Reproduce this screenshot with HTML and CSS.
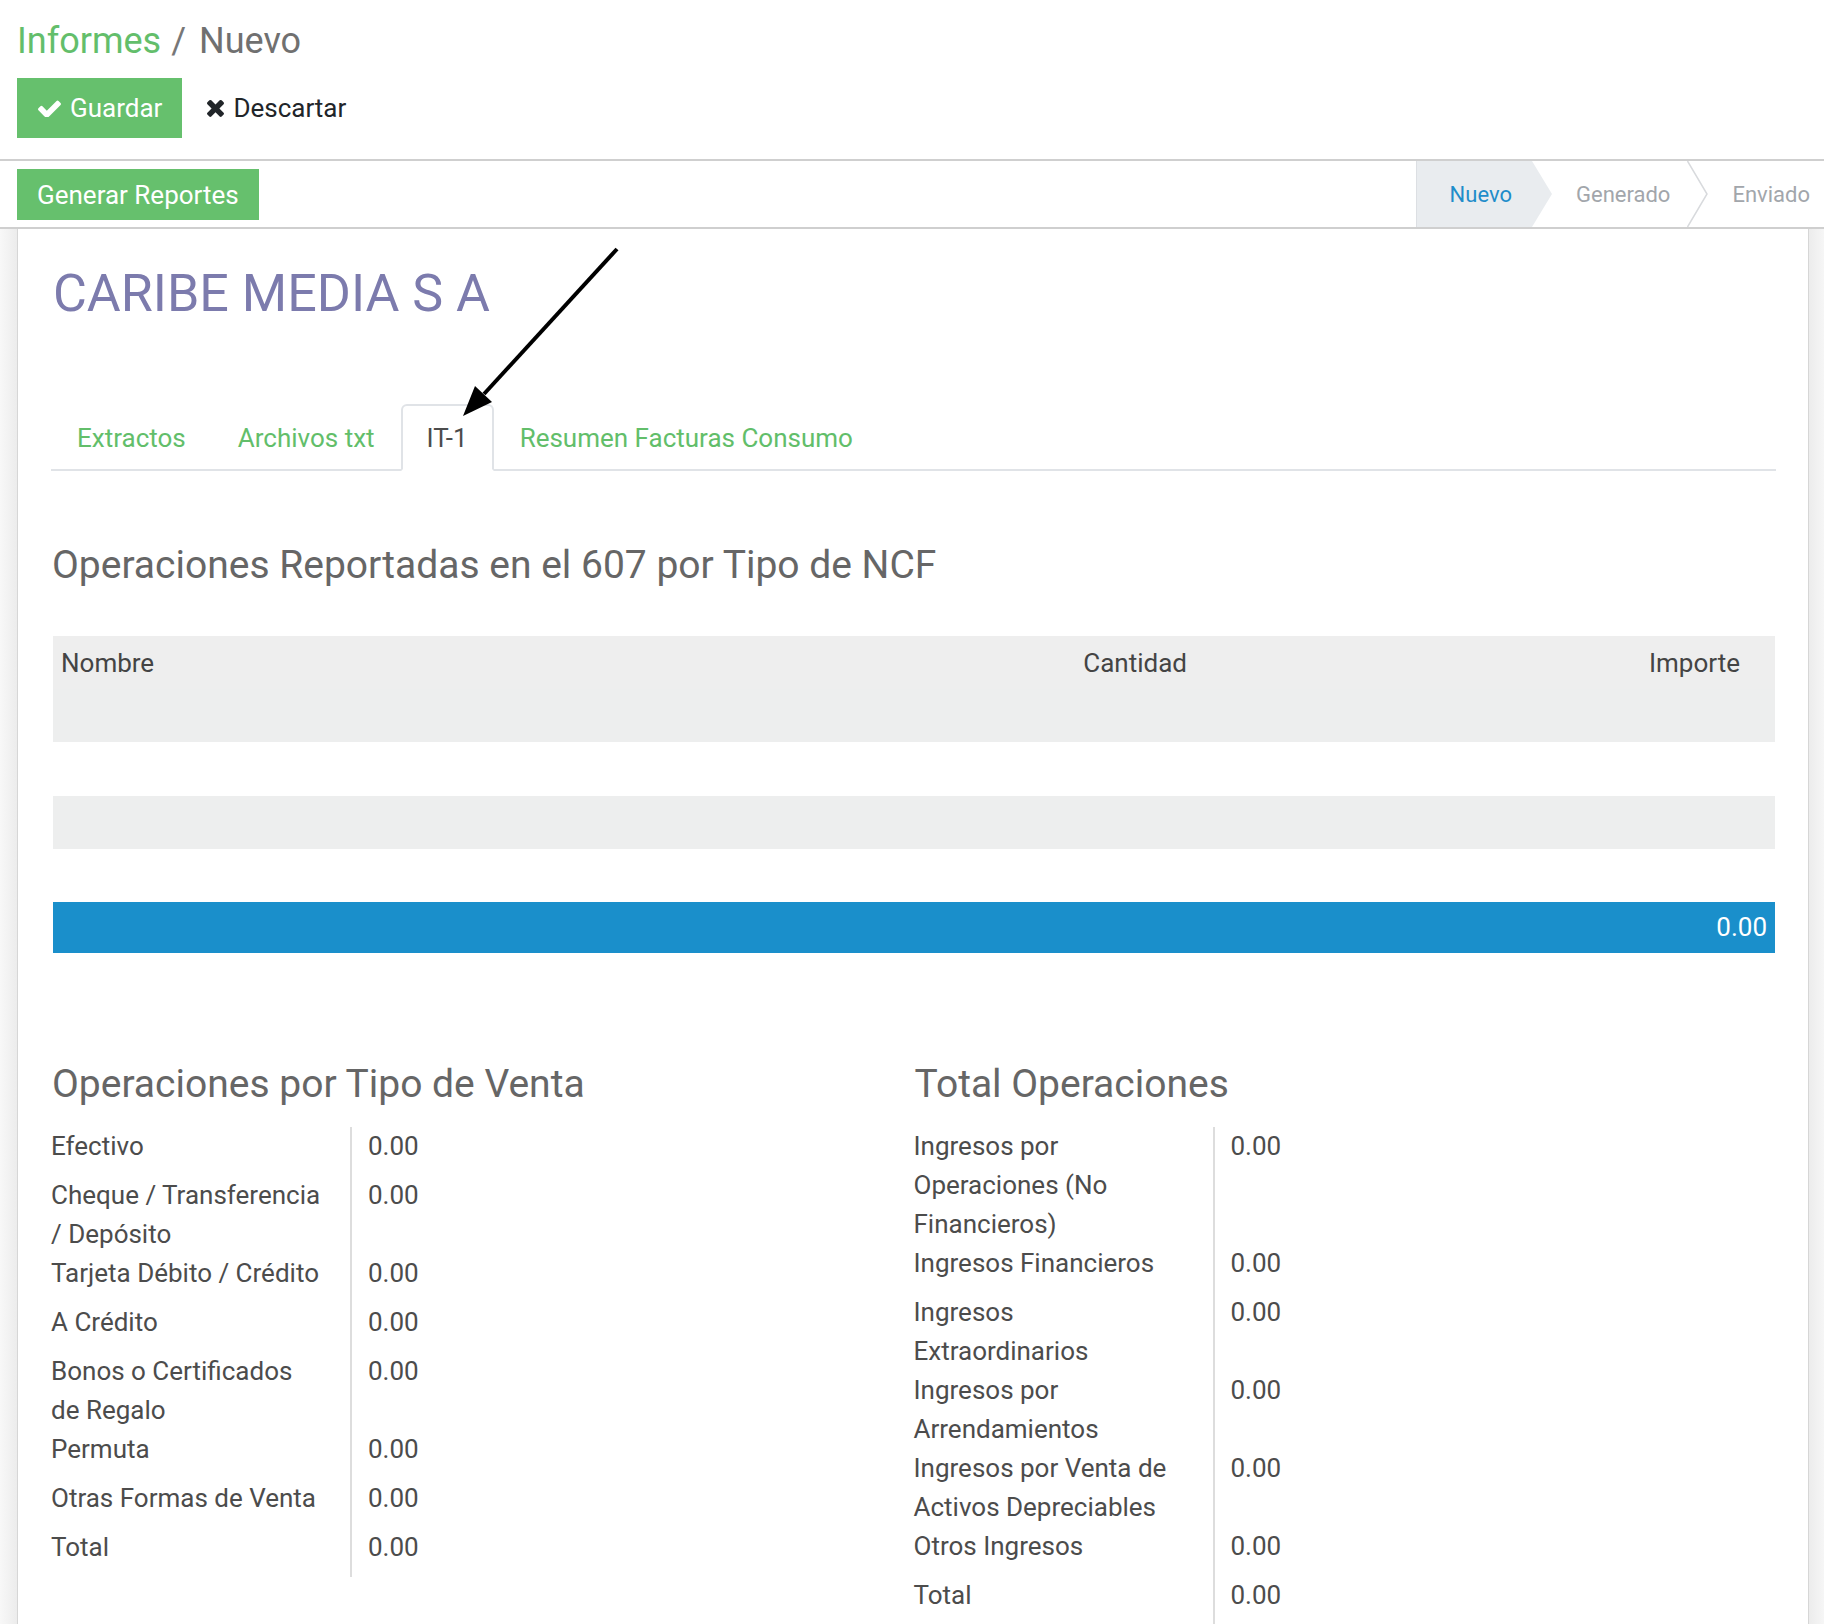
FILE: index.html
```html
<!DOCTYPE html>
<html lang="es">
<head>
<meta charset="utf-8">
<title>Informes / Nuevo</title>
<link rel="stylesheet" href="styles.css">
</head>
<body>
<div class="cp">
  <div class="breadcrumb"><span class="bc-link">Informes</span><span class="bc-sep">/</span><span class="bc-cur">Nuevo</span></div>
  <div class="cp-buttons">
    <button class="btn btn-green btn-save"><svg class="ico-check" viewBox="120 360 1552 1030"><path d="M1671 566q0 40-28 68l-724 724-136 136q-28 28-68 28t-68-28l-136-136-362-362q-28-28-28-68t28-68l136-136q28-28 68-28t68 28l294 295 656-657q28-28 68-28t68 28l136 136q28 28 28 68z"/></svg>Guardar</button>
    <button class="btn btn-link"><svg class="ico-times" viewBox="110 370 1188 1184"><path d="M1298 1322q0 40-28 68l-136 136q-28 28-68 28t-68-28l-294-294-294 294q-28 28-68 28t-68-28l-136-136q-28-28-28-68t28-68l294-294-294-294q-28-28-28-68t28-68l136-136q28-28 68-28t68 28l294 294 294-294q28-28 68-28t68 28l136 136q28 28 28 68t-28 68l-294 294 294 294q28 28 28 68z"/></svg>Descartar</button>
  </div>
</div>
<div class="header-bar">
  <button class="btn btn-green btn-gen">Generar Reportes</button>
  <div class="statusbar">
    <span class="st st-active">Nuevo</span>
    <span class="st st-gen">Generado</span>
    <svg class="chev" viewBox="0 0 21 66"><path d="M0.5 0 L20 33 L0.5 66" fill="none" stroke="#d8dadd" stroke-width="1.5"/></svg>
    <span class="st st-env">Enviado</span>
  </div>
</div>
<div class="main">
  <div class="sheet">
    <h1 class="title">CARIBE MEDIA S A</h1>
    <ul class="tabs">
      <li><a class="tab">Extractos</a></li>
      <li><a class="tab">Archivos txt</a></li>
      <li><a class="tab tab-active">IT-1</a></li>
      <li><a class="tab">Resumen Facturas Consumo</a></li>
    </ul>
    <h2 class="sep sep-first">Operaciones Reportadas en el 607 por Tipo de NCF</h2>
    <div class="list">
      <div class="lrow lhead"><div class="c-name">Nombre</div><div class="c-num">Cantidad</div><div class="c-num">Importe</div><div></div></div>
      <div class="lrow lgray2"></div>
      <div class="lrow lwhite lrow-b"></div>
      <div class="lrow lgray2"></div>
      <div class="lrow lwhite"></div>
      <div class="lfoot">0.00</div>
    </div>
    <div class="groups">
      <div class="group">
        <h2 class="sep">Operaciones por Tipo de Venta</h2>
        <div class="fields">
          <div class="lbl">Efectivo</div><div class="val">0.00</div>
          <div class="lbl">Cheque / Transferencia / Depósito</div><div class="val">0.00</div>
          <div class="lbl">Tarjeta Débito / Crédito</div><div class="val">0.00</div>
          <div class="lbl">A Crédito</div><div class="val">0.00</div>
          <div class="lbl">Bonos o Certificados de Regalo</div><div class="val">0.00</div>
          <div class="lbl">Permuta</div><div class="val">0.00</div>
          <div class="lbl">Otras Formas de Venta</div><div class="val">0.00</div>
          <div class="lbl">Total</div><div class="val">0.00</div>
        </div>
      </div>
      <div class="group">
        <h2 class="sep">Total Operaciones</h2>
        <div class="fields">
          <div class="lbl">Ingresos por Operaciones (No Financieros)</div><div class="val">0.00</div>
          <div class="lbl">Ingresos Financieros</div><div class="val">0.00</div>
          <div class="lbl">Ingresos Extraordinarios</div><div class="val">0.00</div>
          <div class="lbl">Ingresos por Arrendamientos</div><div class="val">0.00</div>
          <div class="lbl">Ingresos por Venta de Activos Depreciables</div><div class="val">0.00</div>
          <div class="lbl">Otros Ingresos</div><div class="val">0.00</div>
          <div class="lbl">Total</div><div class="val">0.00</div>
          <div class="lbl lbl-more"></div><div class="val"></div>
        </div>
      </div>
    </div>
  </div>
</div>
<svg class="annot" viewBox="0 0 1824 1624" width="1824" height="1624">
  <line x1="617" y1="249" x2="484" y2="394" stroke="#000" stroke-width="4"/>
  <polygon points="463,416 492,402 475,386" fill="#000"/>
</svg>
</body>
</html>
```

FILE: styles.css
```css
html {
  overflow: hidden;
}
body {
  margin: 0;
  font-family: Roboto, "Liberation Sans", Arial, sans-serif;
  font-size: 26px;
  color: #4c4c4c;
  background: #fff;
  position: relative;
}

/* ---------- control panel ---------- */
.cp {
  padding: 20px 17px 21px 17px;
  border-bottom: 2px solid #cfcfcf;
}
.breadcrumb {
  font-size: 36px;
  line-height: 43px;
  height: 43px;
  display: flex;
}
.bc-link {
  color: #63be6b;
}
.bc-sep {
  color: #777;
  margin: 0 13px 0 10px;
}
.bc-cur {
  color: #707070;
}
.cp-buttons {
  margin-top: 15px;
  display: flex;
  align-items: center;
  gap: 6px;
}
.btn {
  font-family: Roboto, "Liberation Sans", Arial, sans-serif;
  font-size: 26px;
  border: none;
  background: none;
  margin: 0;
  cursor: pointer;
  display: flex;
  align-items: center;
}
.btn-green {
  background: #66c06d;
  color: #fff;
}
.btn-save {
  height: 60px;
  padding: 0 20px 0 21px;
}
.ico-check {
  width: 23px;
  height: 17px;
  fill: #fff;
  margin-right: 9px;
}
.btn-link {
  height: 60px;
  padding: 0 0 0 19px;
  color: #212529;
}
.ico-times {
  width: 17px;
  height: 17px;
  fill: #212529;
  margin-right: 9px;
}

/* ---------- header bar ---------- */
.header-bar {
  height: 66px;
  display: flex;
  justify-content: space-between;
  align-items: stretch;
  padding-left: 17px;
  border-bottom: 2px solid #cfcfcf;
}
.btn-gen {
  align-self: flex-start;
  margin-top: 8px;
  height: 51px;
  padding: 0 20px;
}
.statusbar {
  display: flex;
  align-items: stretch;
  font-size: 22px;
}
.st {
  display: flex;
  align-items: center;
  color: #a2a6ab;
}
.st-active {
  background: #e9ecef;
  color: #1f8dca;
  padding: 0 40px 0 33px;
  clip-path: polygon(0 0, calc(100% - 20px) 0, 100% 50%, calc(100% - 20px) 100%, 0 100%);
  border-left: 1px solid #dcdfe3;
}
.st-gen {
  padding: 0 17px 0 24px;
}
.chev {
  width: 21px;
  height: 66px;
}
.st-env {
  padding: 0 14px 0 24px;
}

/* ---------- sheet ---------- */
.main {
  background: linear-gradient(to right, #f8f8f8 0, #ececec 17px, transparent 17px, transparent calc(100% - 15px), #ececec calc(100% - 15px), #f6f6f6 100%);
  padding: 0 15px 0 17px;
  min-height: 1395px;
}
.sheet {
  background: #fff;
  border-left: 1px solid #d6d6d6;
  border-right: 1px solid #d6d6d6;
  padding: 34px 32px 0 33px;
  min-height: 1361px;
}
.title {
  margin: 0;
  padding-left: 2px;
  font-size: 52px;
  line-height: 62px;
  font-weight: 400;
  color: #7c7bad;
}

.tabs {
  list-style: none;
  margin: 79px 0 0 0;
  padding: 0;
  display: flex;
  border-bottom: 2px solid #e0e3e7;
}
.tab {
  display: block;
  box-sizing: border-box;
  height: 67px;
  line-height: 64px;
  padding: 0 24px;
  margin-bottom: -2px;
  border: 2px solid transparent;
  border-radius: 6px 6px 0 0;
  color: #62be6a;
}
.tab-active {
  color: #4c4c4c;
  background: #fff;
  border-color: #e0e3e7 #e0e3e7 #fff #e0e3e7;
}

.sep {
  margin: 0;
  padding-left: 1px;
  font-size: 39px;
  line-height: 47px;
  font-weight: 400;
  color: #666;
}
.sep-first {
  margin-top: 71px;
}

.list {
  margin: 47px 1px 0 2px;
}
.lrow {
  display: grid;
  grid-template-columns: 1fr 165px 553px 27px;
  height: 53px;
  align-items: center;
}
.lrow-b {
  height: 54px;
}
.lhead {
  background: #eeeeee;
  color: #444;
}
.c-name {
  padding-left: 8px;
}
.c-num {
  text-align: right;
  padding-right: 8px;
}
.lgray2 {
  background: #edeeee;
}
.lwhite {
  background: #fff;
}
.lfoot {
  height: 51px;
  line-height: 51px;
  background: #1a8fcb;
  color: #fff;
  text-align: right;
  padding-right: 8px;
}

.groups {
  margin-top: 108px;
  display: grid;
  grid-template-columns: 1fr 1fr;
}
.group .sep {
  margin-bottom: 19px;
}
.fields {
  display: grid;
  grid-template-columns: 301px 1fr;
}
.lbl {
  box-sizing: border-box;
  padding-right: 27px;
  border-right: 2px solid #dddddd;
  line-height: 39px;
}
.lbl-more {
  min-height: 60px;
}
.val {
  padding-left: 16px;
  line-height: 39px;
  padding-bottom: 10px;
}

.annot {
  position: absolute;
  left: 0;
  top: 0;
  pointer-events: none;
}
```
